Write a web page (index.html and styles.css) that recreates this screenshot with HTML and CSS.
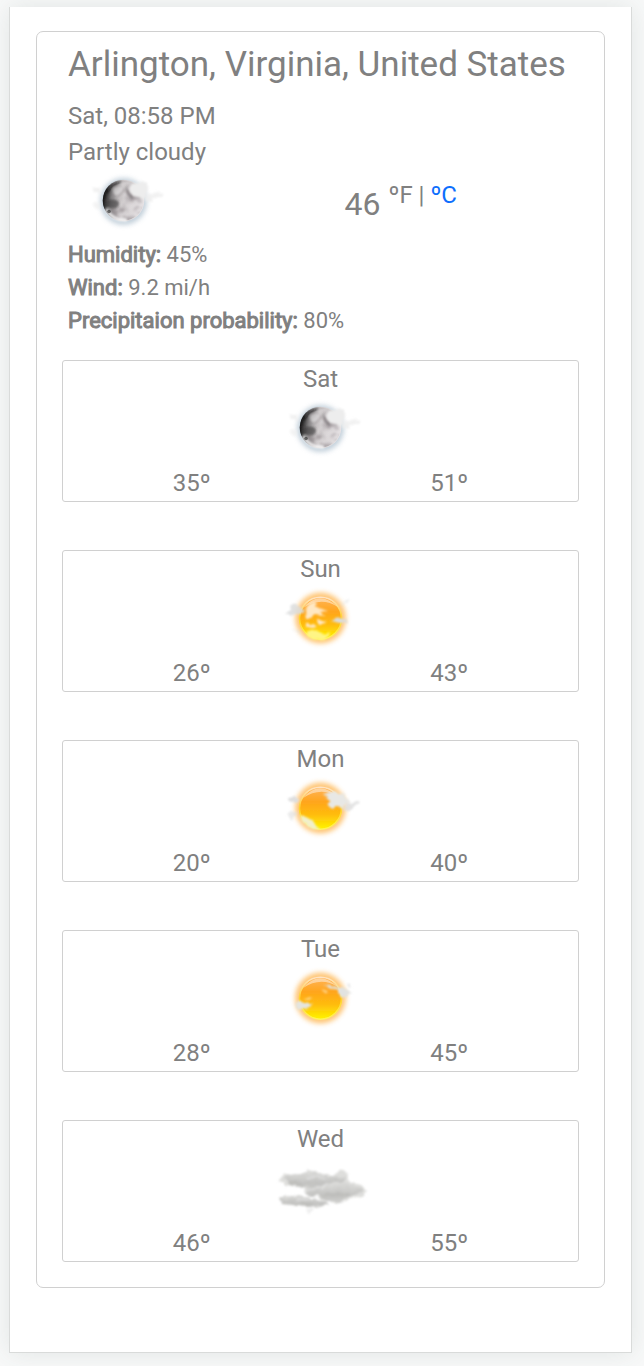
FILE: index.html
```
<!DOCTYPE html>
<html lang="en">
<head>
<meta charset="utf-8">
<meta name="viewport" content="width=device-width, initial-scale=1">
<title>Weather</title>
<link rel="stylesheet" href="styles.css">
</head>
<body>
<svg class="defs" aria-hidden="true" width="0" height="0">
  <defs>
    <filter id="b05" x="-30%" y="-30%" width="160%" height="160%"><feGaussianBlur stdDeviation=".7"/></filter>
    <filter id="b1" x="-30%" y="-30%" width="160%" height="160%"><feGaussianBlur stdDeviation="1.3"/></filter>
    <filter id="b2" x="-40%" y="-40%" width="180%" height="180%"><feGaussianBlur stdDeviation="2.4"/></filter>
    <filter id="wisp" x="-30%" y="-30%" width="160%" height="160%">
      <feTurbulence type="fractalNoise" baseFrequency=".14" numOctaves="3" seed="4" result="n"/>
      <feDisplacementMap in="SourceGraphic" in2="n" scale="5" xChannelSelector="R" yChannelSelector="G"/>
      <feGaussianBlur stdDeviation=".8"/>
    </filter>
    <filter id="craters" x="0" y="0" width="100%" height="100%" color-interpolation-filters="sRGB">
      <feTurbulence type="fractalNoise" baseFrequency=".13" numOctaves="3" seed="8"/>
      <feColorMatrix values="0 0 0 0 .42  0 0 0 0 .38  0 0 0 0 .4  2.6 0 0 0 -1"/>
      <feGaussianBlur stdDeviation=".8"/>
      <feComposite in2="SourceGraphic" operator="in"/>
    </filter>
    <linearGradient id="sunFill" x1="0" y1="0" x2="0" y2="1">
      <stop offset="0" stop-color="#ffb45a"/><stop offset=".35" stop-color="#ffa51c"/>
      <stop offset=".65" stop-color="#ffbc0c"/><stop offset="1" stop-color="#fff500"/>
    </linearGradient>
    <linearGradient id="sunRim" x1="0" y1="0" x2="0" y2="1">
      <stop offset="0" stop-color="#ffe3c4"/><stop offset=".5" stop-color="#ffd12c"/><stop offset="1" stop-color="#fff45a"/>
    </linearGradient>
    <linearGradient id="moonFill" x1="0" y1="0" x2="1" y2=".15">
      <stop offset="0" stop-color="#050505"/><stop offset=".12" stop-color="#222"/><stop offset=".28" stop-color="#8c8a8b"/>
      <stop offset=".48" stop-color="#d0cccd"/><stop offset="1" stop-color="#e6e2e4"/>
    </linearGradient>
    <linearGradient id="cloudFill" x1="0" y1="0" x2="0" y2="1">
      <stop offset="0" stop-color="#dcdcda"/><stop offset=".7" stop-color="#c1c1bf"/><stop offset="1" stop-color="#d2d2d0"/>
    </linearGradient>
    <g id="sunDisc">
      <circle cx="50.5" cy="38" r="25.5" fill="#ffc068" opacity=".9" filter="url(#b2)"/>
      <circle cx="50.5" cy="38.2" r="21" fill="url(#sunFill)" stroke="url(#sunRim)" stroke-width="1.6" filter="url(#b05)"/>
      <path d="M33 28Q49 9 68 27Q51 16 33 28Z" fill="#fff" opacity=".45" filter="url(#b05)"/>
    </g>
    <symbol id="moon" viewBox="1 7 100 64">
      <circle cx="50.5" cy="38.5" r="23.5" fill="#b4c4d1" opacity=".8" filter="url(#b2)"/>
      <circle cx="50.5" cy="37.5" r="20.8" fill="url(#moonFill)" filter="url(#b05)"/>
      <circle cx="50.5" cy="37.5" r="20" fill="#fff" opacity=".45" filter="url(#craters)"/>
      <g filter="url(#b1)">
        <path d="M34 27Q40 19 49 18Q44 22 40 24Q37 26 33 32Z" fill="#111" opacity=".7"/>
        <path d="M31 39Q39 34 45 38Q48 42 43 45Q36 46 32 42Z" fill="#333" opacity=".55"/>
        <path d="M41 25Q47 21 50 26Q47 33 42 32Q39 29 41 25Z" fill="#fff" opacity=".45"/>
        <path d="M53 22Q55 29 61 34Q59 38 54 31Z" fill="#706b6e" opacity=".6"/>
        <path d="M33 46Q40 58 54 57" fill="none" stroke="#fff" stroke-width="3" opacity=".8"/>
      </g>
      <circle cx="36" cy="48.5" r="1.8" fill="#222" opacity=".6" filter="url(#b05)"/>
      <g filter="url(#wisp)" fill="#ededed">
        <path d="M56 25Q59 18 65 20Q72 15 76 25Q76 34 68 37Q62 33 58 29Z"/>
        <path d="M75 32L82 29Q87 27 86 30Q92 31 89 34L80 34L79 38L71 37Z" opacity=".8"/>
        <path d="M18 24L27 26L27 31L21 29Z" opacity=".8"/>
        <path d="M21 39L27 40L24 47L20 45Z" opacity=".6"/>
      </g>
    </symbol>
    <symbol id="sun-hazy" viewBox="1 7 100 64">
      <use href="#sunDisc"/>
      <g filter="url(#wisp)" fill="#ffe8c4">
        <path d="M35 32Q36 23 42 22L48 24L45 27L52 29L58 31L49 32L55 36L44 35L40 38L36 38Z"/>
        <path d="M37 43L47 45L45 48L37 47ZM46 41L57 41L54 43L47 43Z"/>
        <path d="M35 52Q42 48 50 52Q58 56 61 51Q59 60 49 60Q39 60 35 52Z" fill="#fff585"/>
      </g>
      <g filter="url(#wisp)" fill="#dcdddd">
        <path d="M19 26Q24 21 29 26Q36 28 33 34L26 34L20 36L16 34L22 30Z" opacity=".85"/>
        <path d="M61 41L68 38L76 39L78 43L70 43Z"/>
        <path d="M71 24L80 19L77 23L72 26Z" opacity=".6"/>
        <path d="M21 49L29 51L31 55Z" opacity=".5"/>
      </g>
    </symbol>
    <symbol id="sun-cloudy" viewBox="1 7 100 64">
      <use href="#sunDisc"/>
      <g filter="url(#wisp)" fill="#e8e8e5">
        <path d="M54 23L60 22Q65 20 69 23Q76 21 76 28L80 32L75 35L72 38L65 37L63 39L58 34L61 30L56 28L58 26Z"/>
        <path d="M31 46Q35 44 38 49Q44 50 46 56L49 59Q41 60 37 55L33 54Z" fill="#f2f0cc"/>
      </g>
      <g filter="url(#wisp)" fill="#dedede">
        <path d="M18 28L24 27L29 29L26 33L20 31Z"/>
        <path d="M77 33L83 32L86 30L90 33L84 36L81 40L71 40Z" opacity=".85"/>
        <path d="M17 43L22 41L28 43L24 46L22 51L19 48Z" opacity=".6"/>
      </g>
    </symbol>
    <symbol id="sun-mostly" viewBox="1 7 100 64">
      <use href="#sunDisc"/>
      <g filter="url(#wisp)">
        <path d="M54 24L60 25L66 27Q72 26 75 29L81 32L77 36L71 37L67 34L67 30L61 28Z" fill="#e2e3e1"/>
        <path d="M51 29L58 31L55 34Z" fill="#ffe4aa" opacity=".7"/>
        <path d="M24 43L30 41L35 43L43 43L39 47L33 50L28 50Z" fill="#e5e5df"/>
        <path d="M34 38L38 37L42 38L36 40Z" fill="#ffe0a0" opacity=".7"/>
        <path d="M78 25L81 23L80 27Z" fill="#e2e2e2"/>
      </g>
    </symbol>
    <symbol id="clouds" viewBox="0 2 100 64">
      <g filter="url(#wisp)">
        <path d="M9 25L13 17L20 20L31 19L37 15L48 18L60 21L70 14L76 19L78 26L89 30L92 32L96 36L92 41L80 43L75 46L64 48L45 42L38 42L33 34L22 31L15 30Z" fill="#dededc"/>
        <path d="M12 22Q22 18 29 20Q34 15 40 17L54 21L76 22L74 27L61 27L53 31L36 34L20 30Z" fill="url(#cloudFill)"/>
        <path d="M34 37Q43 31 51 31Q55 26 66 28L80 29L93 34L90 38L77 42L70 47L58 46L47 41L38 41Z" fill="url(#cloudFill)"/>
        <path d="M8 44Q15 40 22 41Q29 38 38 43L54 45L58 49L46 53L33 52L21 50L10 49Z" fill="url(#cloudFill)"/>
        <path d="M38 34Q48 35 55 30M36 23Q45 20 55 24M25 44L39 45" fill="none" stroke="#e8e8e8" stroke-width="2" opacity=".55"/>
        <path d="M17 27L32 30M53 39Q65 41 79 38M27 49L42 49" fill="none" stroke="#b9b9b7" stroke-width="3" opacity=".55"/>
        <path d="M34 54L43 54L39 59Z" fill="#eee"/>
      </g>
    </symbol>
  </defs>
</svg>

<main class="page">
  <section class="weather">
    <header class="place">
      <h1 class="place-name">Arlington, Virginia, United States</h1>
      <p class="line">Sat, 08:58 PM</p>
      <p class="line">Partly cloudy</p>
    </header>
    <div class="current">
      <div class="current-sky"><svg class="icon" role="img" aria-label="Partly cloudy"><use href="#moon"/></svg></div>
      <div class="current-temp"><span class="degrees">46</span> <span class="units">ºF | <a class="unit-link" href="#">ºC</a></span></div>
    </div>
    <div class="details">
      <p class="detail"><strong>Humidity:</strong> 45%</p>
      <p class="detail"><strong>Wind:</strong> 9.2 mi/h</p>
      <p class="detail"><strong>Precipitaion probability:</strong> 80%</p>
    </div>
    <div class="forecast">
      <article class="day">
        <h2 class="day-name">Sat</h2>
        <svg class="icon" aria-hidden="true"><use href="#moon"/></svg>
        <div class="range"><span>35º</span><span>51º</span></div>
      </article>
      <article class="day">
        <h2 class="day-name">Sun</h2>
        <svg class="icon" aria-hidden="true"><use href="#sun-hazy"/></svg>
        <div class="range"><span>26º</span><span>43º</span></div>
      </article>
      <article class="day">
        <h2 class="day-name">Mon</h2>
        <svg class="icon" aria-hidden="true"><use href="#sun-cloudy"/></svg>
        <div class="range"><span>20º</span><span>40º</span></div>
      </article>
      <article class="day">
        <h2 class="day-name">Tue</h2>
        <svg class="icon" aria-hidden="true"><use href="#sun-mostly"/></svg>
        <div class="range"><span>28º</span><span>45º</span></div>
      </article>
      <article class="day">
        <h2 class="day-name">Wed</h2>
        <svg class="icon" aria-hidden="true"><use href="#clouds"/></svg>
        <div class="range"><span>46º</span><span>55º</span></div>
      </article>
    </div>
  </section>
</main>
</body>
</html>
```
FILE: styles.css
```
* { box-sizing: border-box; }

body {
  margin: 0;
  padding: 7px 12px 13px 9px;
  background: #f8f9f9;
  color: #808080;
  font: 24px/36px Roboto, "Liberation Sans", sans-serif;
}

h1, h2, p { margin: 0; font-weight: 400; }

.defs { position: absolute; }

.page {
  padding: 24px 26px 64px;
  background: #fff;
  border: 1px solid #d9dbda;
  border-top: 0;
  box-shadow: 0 0 24px rgba(60, 80, 70, .12);
}

.weather {
  padding: 11px 25px 25px;
  border: 1px solid #d0d0d0;
  border-radius: 7px;
}

.place { padding: 0 6px; }

.place-name {
  margin-bottom: 11px;
  font-size: 35px;
  line-height: 44px;
}

.icon {
  display: block;
  width: 100px;
  height: 64px;
}

.current {
  display: grid;
  grid-template-columns: 1fr 1fr;
}

.current-sky { padding-left: 12px; }

.current-temp {
  display: flex;
  align-items: flex-start;
  gap: 8px;
  padding: 7px 0 0 24px;
}

.degrees {
  padding-top: 9px;
  font-size: 32px;
}

.unit-link {
  color: #0d6efd;
  text-decoration: none;
}

.details {
  padding: 4px 6px 0;
  font-size: 22px;
  line-height: 33px;
}

.detail strong {
  font-weight: 400;
  -webkit-text-stroke: 1px currentColor;
}

.forecast {
  display: grid;
  gap: 48px;
  margin-top: 23px;
}

.day {
  display: flex;
  flex-direction: column;
  align-items: center;
  border: 1px solid #d0d0d0;
  border-radius: 3px;
}

.day-name { font-size: 24px; }

.range {
  display: grid;
  grid-template-columns: 1fr 1fr;
  width: 100%;
  padding-top: 4px;
  text-align: center;
}
```
